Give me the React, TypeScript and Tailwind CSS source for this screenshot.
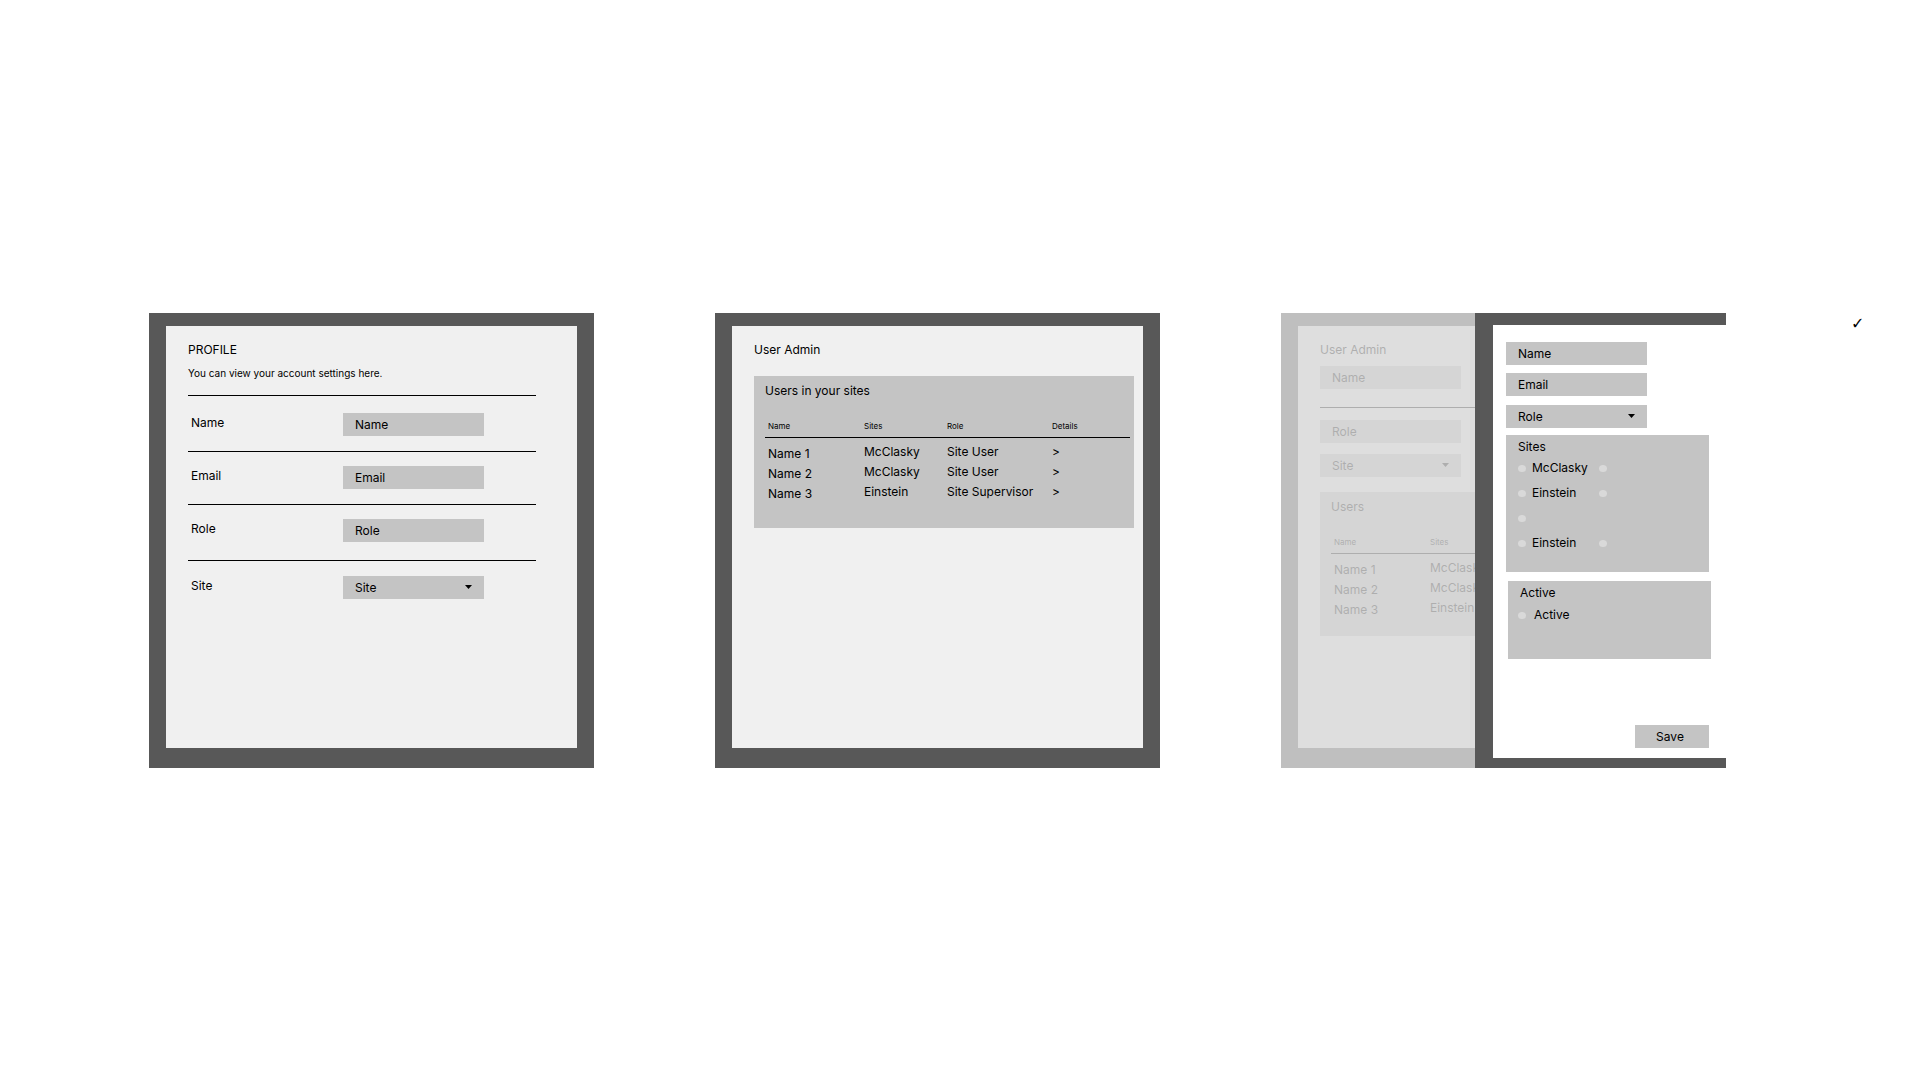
import React, { useId } from "react";

const users = [
  { name: "Name 1", site: "McClasky", role: "Site User" },
  { name: "Name 2", site: "McClasky", role: "Site User" },
  { name: "Name 3", site: "Einstein", role: "Site Supervisor" },
];

const profileRows = [
  { label: "Name", pad: "pt-[17px] pb-[15px]" },
  { label: "Email", pad: "pt-[14px] pb-[15px]" },
  { label: "Role", pad: "pt-[14px] pb-[18px]" },
  { label: "Site", pad: "pt-[15px]", select: true },
];

const sites = [
  { label: "McClasky", second: true },
  { label: "Einstein", second: true },
  { label: "", second: false },
  { label: "Einstein", second: true },
];

function TextField({ label, id }: { label: string; id?: string }) {
  return (
    <input
      id={id}
      type="text"
      aria-label={label}
      defaultValue={label}
      className="block h-[23px] w-[141px] bg-[#c4c4c4] px-3 outline-none"
    />
  );
}

function SelectField({ label, id }: { label: string; id?: string }) {
  return (
    <div className="relative h-[23px] w-[141px]">
      <select
        id={id}
        aria-label={label}
        className="block h-full w-full appearance-none bg-[#c4c4c4] px-3 outline-none"
      >
        <option>{label}</option>
      </select>
      <svg
        viewBox="0 0 7 4"
        className="pointer-events-none absolute top-[9px] right-3 h-1 w-[7px]"
        aria-hidden="true"
      >
        <path d="M0 0h7L3.5 4z" />
      </svg>
    </div>
  );
}

function Panel({ children, className = "" }: { children: React.ReactNode; className?: string }) {
  return (
    <section className="flex min-h-[455px] min-w-0 flex-1 flex-col bg-[#585858] px-[17px] pt-[13px] pb-5">
      <div className={`flex-1 bg-[#f0f0f0] pt-4 pl-[22px] ${className}`}>{children}</div>
    </section>
  );
}

function UsersTable({ title, compact = false }: { title: string; compact?: boolean }) {
  return (
    <div className="pt-[7px] pr-1 pl-[11px]">
      <h2>{title}</h2>
      <table className="mt-[19px] w-full table-fixed border-collapse text-left">
        <thead className="border-b border-black text-[8px]">
          <tr className="h-[19px] align-top">
            <th className="w-[99px] pl-[3px] font-normal">Name</th>
            {compact ? (
              <th className="font-normal">Sites</th>
            ) : (
              <>
                <th className="w-[83px] font-normal">Sites</th>
                <th className="w-[105px] font-normal">Role</th>
                <th className="font-normal">Details</th>
              </>
            )}
          </tr>
        </thead>
        <tbody className="before:block before:h-1 before:content-['']">
          {users.map((u) => (
            <tr key={u.name} className="h-5 align-top">
              <td className="pt-1 pl-[3px]">{u.name}</td>
              <td className="pt-0.5">{u.site}</td>
              {!compact && (
                <>
                  <td className="pt-0.5 whitespace-nowrap">{u.role}</td>
                  <td className="pt-0.5">
                    <button type="button" aria-label={`Details for ${u.name}`} className="block">
                      &gt;
                    </button>
                  </td>
                </>
              )}
            </tr>
          ))}
        </tbody>
      </table>
    </div>
  );
}

function Dot({ id, label }: { id?: string; label: string }) {
  return (
    <input
      id={id}
      type="checkbox"
      aria-label={label}
      className="h-[7px] w-2 shrink-0 appearance-none rounded-[50%] bg-[#d9d9d9]"
    />
  );
}

function ProfilePanel() {
  const id = useId();
  return (
    <Panel className="pr-[41px]">
      <h1>PROFILE</h1>
      <p className="mt-[7px] mb-[14px] text-[10px] leading-4">
        You can view your account settings here.
      </p>
      {profileRows.map((row) => (
        <div
          key={row.label}
          className={`grid grid-cols-[155px_141px] items-start border-t border-black ${row.pad}`}
        >
          <label htmlFor={id + row.label} className="pt-0.5 pl-[3px]">
            {row.label}
          </label>
          {row.select ? (
            <SelectField id={id + row.label} label={row.label} />
          ) : (
            <TextField id={id + row.label} label={row.label} />
          )}
        </div>
      ))}
    </Panel>
  );
}

function AdminPanel() {
  return (
    <Panel className="pr-[9px]">
      <h1>User Admin</h1>
      <div className="mt-[18px] min-h-[152px] bg-[#c4c4c4]">
        <UsersTable title="Users in your sites" />
      </div>
    </Panel>
  );
}

function Drawer() {
  const id = useId();
  return (
    <aside className="absolute inset-y-0 right-0 flex w-[251px] bg-[#585858] pt-3 pb-[10px] pl-[18px]">
      <form className="flex min-w-0 flex-1 flex-col bg-white pt-[17px] pr-[17px] pb-[10px] pl-[13px]">
        <div className="mb-[9px] flex flex-col gap-2">
          <TextField label="Name" />
          <TextField label="Email" />
        </div>
        <SelectField label="Role" />
        <fieldset className="mt-[7px] h-[137px] w-[203px] bg-[#c4c4c4] pt-1 pl-3">
          <legend className="float-left w-full">Sites</legend>
          <div className="clear-both flex flex-col gap-[9px] pt-[5px]">
            {sites.map((s, i) => (
              <div key={i} className="flex h-4 items-center gap-[6px]">
                <Dot id={`${id}site${i}`} label={s.label || "Site"} />
                <label htmlFor={`${id}site${i}`} className="w-[61px]">
                  {s.label}
                </label>
                {s.second && <Dot label={`${s.label} option`} />}
              </div>
            ))}
          </div>
        </fieldset>
        <fieldset className="mt-[9px] ml-0.5 h-[78px] w-[203px] bg-[#c4c4c4] pt-1 pl-[10px]">
          <legend className="float-left w-full pl-0.5">Active</legend>
          <div className="clear-both flex items-center gap-2 pt-[6px]">
            <Dot id={`${id}active`} label="Active" />
            <label htmlFor={`${id}active`}>Active</label>
          </div>
        </fieldset>
        <button type="button" className="mt-auto h-[23px] w-[74px] self-end bg-[#c4c4c4] pr-1">
          Save
        </button>
      </form>
    </aside>
  );
}

function EditPanel() {
  return (
    <div className="relative flex min-w-0">
      <Panel className="pr-[9px]">
        <h1>User Admin</h1>
        <div className="mt-2">
          <TextField label="Name" />
        </div>
        <hr className="mt-[18px] mb-3 border-black" />
        <TextField label="Role" />
        <div className="mt-[11px]">
          <SelectField label="Site" />
        </div>
        <div className="mt-[15px] min-h-[144px] bg-[#c4c4c4]">
          <UsersTable title="Users" compact />
        </div>
      </Panel>
      <div className="absolute inset-0 bg-[#d9d9d9]/80" />
      <Drawer />
    </div>
  );
}

export default function App() {
  return (
    <div className="flex min-h-screen items-start bg-white pt-[313px] font-['Inter',sans-serif] text-[12px] leading-4 text-black">
      <main className="grid min-w-0 flex-1 grid-cols-3 gap-[121px] pl-[149px]">
        <ProfilePanel />
        <AdminPanel />
        <EditPanel />
      </main>
      <span className="w-[194px] pt-[3px] pl-[125px] font-['DejaVu_Sans',sans-serif] text-[16px]">✓</span>
    </div>
  );
}
